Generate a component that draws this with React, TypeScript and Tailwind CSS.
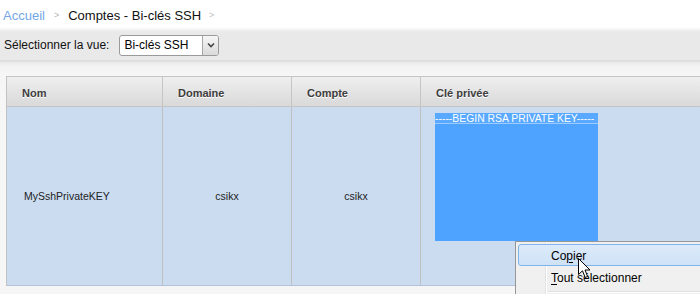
import React from 'react';

const columns = [
  { label: 'Nom', width: 'w-[156px]' },
  { label: 'Domaine', width: 'w-[129px]' },
  { label: 'Compte', width: 'w-[129px]' },
];

// petite flèche de souris dessinée à la main
const Cursor = () => (
  <svg width="13" height="21" viewBox="0 0 13 21" className="absolute left-[578px] top-[258px]">
    <path d="M0.5 0.5 L0.5 16.5 L4.5 12.8 L7.2 19.5 L9.6 18.5 L7 12 L12 12 Z" fill="#fff" stroke="#000" strokeWidth="1" strokeLinejoin="round" />
  </svg>
);

const ContextMenu = () => (
  <div className="absolute left-[515px] top-[241px] w-[200px] h-[60px] border border-[#979797] bg-[#f0f0f0] font-['Liberation_Sans',Arial,sans-serif] text-[12px] text-black">
    {/* gutter */}
    <div className="absolute left-[29px] top-0 bottom-0 w-[2px] border-l border-[#e2e3e3]">
      <div className="h-full border-r border-white" />
    </div>
    <div className="relative flex flex-col pt-[2px] pl-[2px]">
      <div className="h-[22px] flex items-center pl-[32px] pt-[1px] border border-[#7eb4ea] rounded-[3px] bg-[linear-gradient(to_bottom,#dcebfb,#cfe2f6)]">
        <span>
          Co<span className="underline underline-offset-2">p</span>ier
        </span>
      </div>
      <div className="h-[24px] flex items-center pl-[33px]">
        <span>
          <span className="underline underline-offset-2">T</span>out sélectionner
        </span>
      </div>
      <div className="ml-[30px] mt-[1px] h-[2px] border-t border-[#e0e0e0] border-b border-b-white" />
    </div>
  </div>
);

export default function App() {
  return (
    <div className="relative w-[700px] h-[294px] overflow-hidden bg-[#f6f6f6] font-['Liberation_Sans',Arial,sans-serif]">
      {/* Breadcrumb */}
      <div className="h-[27px] bg-white flex items-start pt-[8px] pl-[3px] text-[13px] leading-[15px]">
        <span className="text-[#72a6e6]">Accueil</span>
        <span className="ml-[9px] mr-[9px] text-[9px] text-[#b5b5b5] leading-[15px]">&gt;</span>
        <span className="text-[#111]">Comptes - Bi-clés SSH</span>
        <span className="ml-[8px] text-[9px] text-[#c0c0c0] leading-[15px]">&gt;</span>
      </div>

      {/* Toolbar */}
      <div className="h-[35px] flex items-center pt-[3px] pl-[4px] bg-[linear-gradient(to_bottom,#ffffff,#e9e9e9_5px,#e9e9e9)] border-b-2 border-[#dfdfdf] text-[12px] text-[#111]">
        <span>Sélectionner la vue:</span>
        <div className="ml-[10px] w-[100px] h-[21px] flex items-stretch rounded-[3px] border border-[#9a9a9a] bg-white overflow-hidden">
          <span className="flex-1 flex items-center pl-[4px] text-[12px] text-black">Bi-clés SSH</span>
          <span className="w-[16px] flex items-center justify-center border-l border-[#a6a6a6] bg-[linear-gradient(to_bottom,#f6f6f6,#dadada)]">
            <svg width="8" height="6" viewBox="0 0 8 6">
              <path d="M1 1.5 L4 4.5 L7 1.5" fill="none" stroke="#444" strokeWidth="1.6" />
            </svg>
          </span>
        </div>
      </div>

      {/* Content */}
      <div className="pt-[14px] pl-[6px] bg-[linear-gradient(to_bottom,#e9e9e9,#f3f3f3_4px,#f6f6f6_12px)]">
        <div className="border-l border-[#c2c2c2]">
          {/* Header row */}
          <div className="flex h-[31px] border-t border-b border-[#c9c4c4] bg-[linear-gradient(to_bottom,#efefef,#d9d9d9)] text-[11px] font-bold text-[#3d3d3d] [text-shadow:0_1px_0_#ffffff]">
            {columns.map((c) => (
              <div key={c.label} className={`${c.width} shrink-0 flex items-center pt-[3px] pl-[15px] border-r border-[#c9c4c4]`}>
                {c.label}
              </div>
            ))}
            <div className="flex-1 flex items-center pt-[3px] pl-[15px]">Clé privée</div>
          </div>

          {/* Body row */}
          <div className="flex h-[179px] border-b border-[#b3c1da] bg-[#cbdcf1] text-[10.5px] text-[#222]">
            <div className="w-[156px] shrink-0 flex items-center pt-[2px] pl-[17px] border-r border-[#bfbfbf]">MySshPrivateKEY</div>
            <div className="w-[129px] shrink-0 flex items-center justify-center pt-[2px] border-r border-[#bfbfbf]">csikx</div>
            <div className="w-[129px] shrink-0 flex items-center justify-center pt-[2px] border-r border-[#bfbfbf]">csikx</div>
            <div className="flex-1 pl-[14px] pt-[6px]">
              <div className="w-[163px] h-[128px] bg-[#4da3ff] overflow-hidden">
                <div className="h-[11px] border-b border-[#9ccbff] bg-[#58a9ff] text-white text-[10.4px] leading-[11px] whitespace-nowrap">
                  -----BEGIN RSA PRIVATE KEY-----
                </div>
              </div>
            </div>
          </div>
        </div>
      </div>

      <ContextMenu />
      <Cursor />
    </div>
  );
}
